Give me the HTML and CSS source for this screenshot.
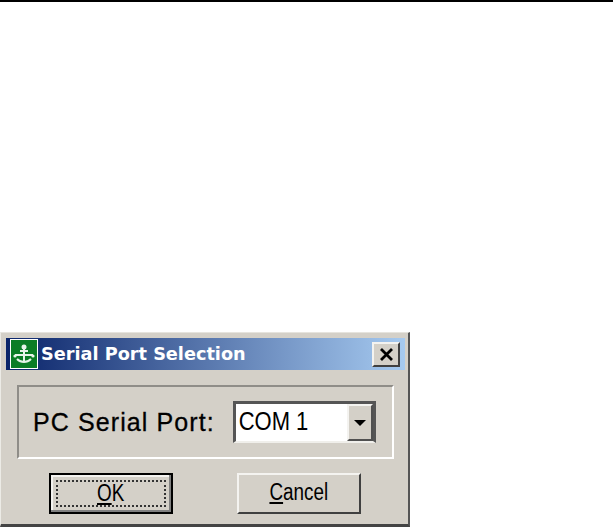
FILE: index.html
```html
<!DOCTYPE html>
<html lang="en">
<head>
    <meta charset="UTF-8">
    <title>Serial Port Selection</title>
    <link rel="stylesheet" href="styles.css">
</head>
<body>

<div class="top-rule"></div>

<div class="dialog">
    <div class="titlebar">
        <svg class="app-icon" width="28" height="30" viewBox="0 0 28 30">
            <rect width="28" height="30" fill="#fff"/>
            <rect x="1" y="1" width="26" height="28" fill="#0b7d26"/>
            <path d="M14 7v15M10 12h8M5 16h18M7 20c2 2 4 3 7 3c3 0 5-1 7-3" fill="none" stroke="#e8f4ea" stroke-width="2"/>
            <circle cx="14" cy="8" r="2.5" fill="#e8f4ea"/>
            <circle cx="5" cy="17" r="1.6" fill="#e8f4ea"/>
            <circle cx="23" cy="17" r="1.6" fill="#e8f4ea"/>
        </svg>
        <span class="title">Serial Port Selection</span>
        <div class="close">
            <svg width="15" height="13" viewBox="0 0 15 13">
                <path d="M2 1l11 11M13 1L2 12" stroke="#000" stroke-width="2.8" fill="none"/>
            </svg>
        </div>
    </div>

    <div class="group">
        <span class="port-label">PC Serial Port:</span>
        <div class="combo">
            <span class="combo-value">COM 1</span>
            <div class="combo-btn"><div class="arrow"></div></div>
        </div>
    </div>

    <div class="buttons">
        <button class="btn btn-default"><span class="focus"><span class="btn-text"><u>O</u>K</span></span></button>
        <button class="btn"><span class="btn-text"><u>C</u>ancel</span></button>
    </div>
</div>

</body>
</html>
```

FILE: styles.css
```css
html, body {
    margin: 0;
    padding: 0;
    background: #fff;
}
body {
    height: 528px;
    overflow: hidden;
    font-family: "Liberation Sans", Arial, sans-serif;
}
.top-rule {
    height: 2px;
    background: #000;
}
.dialog {
    box-sizing: border-box;
    width: 410px;
    height: 195px;
    margin-top: 330px;
    padding: 5px 3px 0 5px;
    background: #d4d0c8;
    border-top: 1px solid #e6e4de;
    border-left: 1px solid #ecebe6;
    border-right: 2px solid #555;
    border-bottom: 3px solid #444;
}
.titlebar {
    display: flex;
    align-items: center;
    height: 32px;
    padding: 0 5px 0 4px;
    background: linear-gradient(to right, #0a246a, #a6caf0);
}
.app-icon {
    flex: none;
}
.title {
    margin-left: 3px;
    color: #fff;
    font-family: "DejaVu Sans", sans-serif;
    font-size: 17.7px;
    font-weight: bold;
    flex: 1;
}
.close {
    box-sizing: border-box;
    width: 28px;
    height: 25px;
    display: flex;
    align-items: center;
    justify-content: center;
    background: #d4d0c8;
    border: 2px solid;
    border-color: #f4f3f0 #404040 #404040 #f4f3f0;
}
.group {
    box-sizing: border-box;
    display: flex;
    align-items: center;
    width: 377px;
    height: 74px;
    margin: 15px 0 0 11px;
    padding-left: 14px;
    border: 2px solid;
    border-color: #8f8d88 #fff #fff #8f8d88;
}
.port-label {
    width: 200px;
    font-size: 25px;
    letter-spacing: 1.1px;
    -webkit-text-stroke: 0.3px #000;
    color: #000;
}
.combo {
    box-sizing: border-box;
    display: flex;
    width: 143px;
    height: 42px;
    background: #fff;
    border-style: solid;
    border-width: 3px 3px 2px 3px;
    border-color: #555 #555 #f0efeb #555;
}
.combo-value {
    flex: 1;
    padding: 3px 0 0 3px;
    font-size: 25px;
    color: #000;
    transform: scaleX(0.88);
    transform-origin: left;
}
.combo-btn {
    box-sizing: border-box;
    width: 26px;
    height: 37px;
    display: flex;
    align-items: center;
    justify-content: center;
    background: #d4d0c8;
    border: 2px solid;
    border-color: #f4f3f0 #505050 #505050 #f4f3f0;
}
.arrow {
    width: 0;
    height: 0;
    border-left: 6px solid transparent;
    border-right: 6px solid transparent;
    border-top: 6px solid #000;
}
.buttons {
    display: flex;
    margin: 14px 0 0 43px;
    gap: 64px;
}
.btn {
    box-sizing: border-box;
    width: 124px;
    height: 41px;
    padding: 0 0 2px;
    background: #d4d0c8;
    border: 2px solid;
    border-color: #f4f3f0 #404040 #404040 #f4f3f0;
    font-family: "Liberation Sans", Arial, sans-serif;
    font-size: 23px;
    color: #000;
}
.btn-text {
    display: inline-block;
    transform: scaleX(0.82);
}
.btn-default {
    padding: 0;
    border: 2px solid #000;
    box-shadow: inset -2px -2px 0 #808080, inset 2px 2px 0 #f4f3f0;
}
.focus {
    box-sizing: border-box;
    display: block;
    width: 110px;
    height: 27px;
    margin: 0 auto;
    line-height: 22px;
    border: 2px dotted #333;
}
```
